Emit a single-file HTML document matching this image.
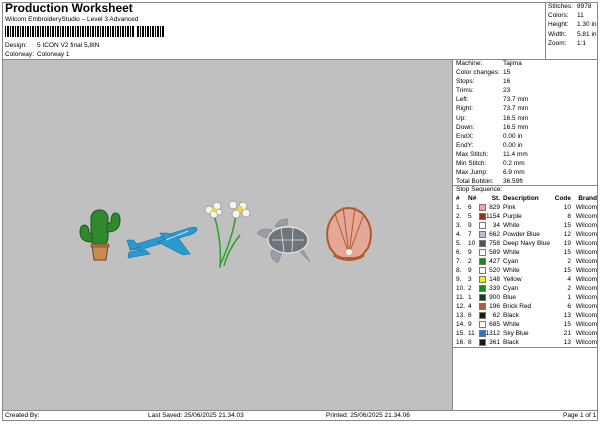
<!DOCTYPE html>
<html><head><meta charset="utf-8"><style>
*{margin:0;padding:0;box-sizing:border-box}
body{width:600px;height:424px;background:#fff;font-family:"Liberation Sans",Arial,sans-serif;color:#000;position:relative;overflow:hidden}
.a{position:absolute;white-space:nowrap}
.s{font-size:6.5px;line-height:9px}
.row{position:absolute;left:456px;width:141px;height:9px;font-size:6.5px;line-height:9px}
.row span{position:absolute}
.sw{position:absolute;left:23px;top:1px;width:7px;height:7px;border:1px solid #777}
</style></head><body>
<div class="a" style="left:2px;top:2px;width:596px;height:419px;border:1px solid #888"></div>
<div class="a" style="left:5px;top:1px;font-size:12px;font-weight:bold">Production Worksheet</div>
<div class="a s" style="left:5px;top:15px">Wilcom EmbroideryStudio – Level 3 Advanced</div>
<div class="a" style="left:5px;top:26px;width:160px;height:11px;background:repeating-linear-gradient(90deg,#000 0 1px,#fff 1px 2px,#000 2px 4px,#fff 4px 5px)"></div>
<div class="a" style="left:134px;top:26px;width:3px;height:11px;background:#fff"></div>
<div class="a s" style="left:5px;top:41px">Design:</div><div class="a s" style="left:37px;top:41px">5 ICON V2 final 5,8IN</div>
<div class="a s" style="left:5px;top:50px">Colorway:</div><div class="a s" style="left:37px;top:50px">Colorway 1</div>
<div class="a" style="left:545px;top:2px;width:1px;height:57px;background:#888"></div>
<div class="a s" style="left:548px;top:2px;line-height:9.2px">Stitches:<br>Colors:<br>Height:<br>Width:<br>Zoom:</div>
<div class="a s" style="left:577px;top:2px;line-height:9.2px">8978<br>11<br>1.30 in<br>5.81 in<br>1:1</div>
<div class="a" style="left:3px;top:59px;width:594px;height:1px;background:#888"></div>
<div class="a" style="left:3px;top:60px;width:449px;height:350px;background:#c0c0c0"></div>
<div class="a" style="left:452px;top:60px;width:1px;height:350px;background:#888"></div>
<div class="a s" style="left:456px;top:59px;line-height:9.1px">Machine:<br>Color changes:<br>Stops:<br>Trims:<br>Left:<br>Right:<br>Up:<br>Down:<br>EndX:<br>EndY:<br>Max Stitch:<br>Min Stitch:<br>Max Jump:<br>Total Bobbin:</div>
<div class="a s" style="left:503px;top:59px;line-height:9.1px">Tajima<br>15<br>16<br>23<br>73.7 mm<br>73.7 mm<br>16.5 mm<br>16.5 mm<br>0.00 in<br>0.00 in<br>11.4 mm<br>0.2 mm<br>6.9 mm<br>36.59ft</div>
<div class="a" style="left:453px;top:185px;width:145px;height:1px;background:#888"></div>
<div class="a s" style="left:456px;top:185px">Stop Sequence:</div>
<div class="row" style="top:194px;font-weight:bold;text-decoration:underline"><span style="left:0">#</span><span style="left:12px">N#</span><span style="right:97px">St.</span><span style="left:47px">Description</span><span style="right:26px">Code</span><span style="right:0">Brand</span></div>
<div id="rows"></div>
<div class="a" style="left:453px;top:347px;width:145px;height:1px;background:#888"></div>
<div class="a" style="left:3px;top:410px;width:594px;height:1px;background:#888"></div>
<div class="a s" style="left:5px;top:411px">Created By:</div>
<div class="a s" style="left:148px;top:411px">Last Saved: 25/06/2025 21.34.03</div>
<div class="a s" style="left:326px;top:411px">Printed: 25/06/2025 21.34.06</div>
<div class="a s" style="left:563px;top:411px">Page 1 of 1</div>
<svg class="a" style="left:0;top:0" width="600" height="424">
<g stroke="#1d5a1d" stroke-width="1">
<rect x="91" y="210" width="17" height="36" rx="8" fill="#2f8a2f"/>
<path d="M92 242 Q80 242 80 232 Q80 225 85 225 Q89 226 89 233 L92 234Z" fill="#2f8a2f"/>
<path d="M107 232 Q120 232 120 220 Q120 213 115 213 Q111 214 111 222 L107 224Z" fill="#2f8a2f"/>
</g>
<path d="M92 245 L108 245 L106 260 L94 260Z" fill="#c98a55" stroke="#6b4020" stroke-width="1"/>
<rect x="91" y="244" width="18" height="3" fill="#b0703e" stroke="#6b4020" stroke-width=".6"/>
<g fill="#2a9bd0" stroke="#1c6f9a" stroke-width=".6">
<path d="M130 246 L186 229 Q198 225 197 230 Q195 234 186 236 L140 250 L130 250Z"/>
<path d="M127 240 L133 240 L140 247 L130 250Z"/>
<path d="M129 252 L145 250 L150 254 L128 258Z"/>
<path d="M158 242 L176 235 L190 254 L183 255Z"/>
<path d="M160 233 L168 233 L175 237 L165 240Z"/>
</g>
<path d="M166 240 L188 231" stroke="#cde" stroke-width="1"/>
<g stroke="#2aa02a" stroke-width="1.5" fill="none">
<path d="M214 215 Q222 240 220 268"/><path d="M236 215 Q232 240 220 265"/><path d="M240 235 Q228 250 224 266"/>
</g>
<g fill="#f4f4ee" stroke="#666" stroke-width=".5">
<circle cx="209" cy="210" r="4"/><circle cx="217" cy="206" r="4"/><circle cx="214" cy="214" r="4"/><circle cx="219" cy="212" r="3"/>
<circle cx="233" cy="205" r="4"/><circle cx="243" cy="206" r="4"/><circle cx="236" cy="214" r="4"/><circle cx="246" cy="213" r="4"/>
</g>
<circle cx="214" cy="210" r="2.5" fill="#e8d840"/><circle cx="240" cy="209" r="3" fill="#e8d840"/>
<g fill="#9a9ca8" stroke="#777" stroke-width=".5">
<path d="M257 233 Q262 227 272 230 L270 238 Q262 238 257 233Z"/>
<path d="M275 227 Q278 218 288 219 L287 225Z"/>
<path d="M272 250 Q268 258 278 263 L282 252Z"/>
<path d="M300 252 Q306 258 310 262 L302 248Z"/>
</g>
<ellipse cx="288" cy="240" rx="20" ry="13" fill="#6f737b" stroke="#e8e8e0" stroke-width="1.2"/>
<g stroke="#e8e8e0" stroke-width=".8" fill="none"><path d="M272 240 L304 240 M281 228 L284 252 M293 228 L292 252"/></g>
<path d="M330 248 Q322 228 336 213 Q348 203 362 213 Q376 228 368 248 L360 258 L338 258Z" fill="#e4a898" stroke="#b05a2c" stroke-width="2"/>
<g stroke="#b05a2c" stroke-width="1" fill="none"><path d="M349 254 L335 214 M349 254 L343 207 M349 254 L355 207 M349 254 L364 214"/></g>
<path d="M334 255 Q349 264 364 255" stroke="#b05a2c" stroke-width="3" fill="none"/>
<circle cx="349" cy="252" r="3" fill="#f4f4ec"/>
</svg>
<script>
var d=[["1.","6","#f2a0a8","829","Pink","10"],["2.","5","#a03010","1154","Purple","8"],["3.","9","#fff","34","White","15"],["4.","7","#c0b8d8","662","Powder Blue","12"],["5.","10","#505060","758","Deep Navy Blue","19"],["6.","9","#fff","589","White","15"],["7.","2","#109010","427","Cyan","2"],["8.","9","#fff","520","White","15"],["9.","3","#f0f010","148","Yellow","4"],["10.","2","#109010","339","Cyan","2"],["11.","1","#104010","900","Blue","1"],["12.","4","#b06040","196","Brick Red","6"],["13.","8","#201810","62","Black","13"],["14.","9","#fff","685","White","15"],["15.","11","#1080c8","1312","Sky Blue","21"],["16.","8","#201810","361","Black","13"]];
var h="";d.forEach(function(r,i){h+='<div class="row" style="top:'+(203+i*9)+'px"><span style="left:0">'+r[0]+'</span><span style="left:12px">'+r[1]+'</span><div class="sw" style="background:'+r[2]+'"></div><span style="right:97px">'+r[3]+'</span><span style="left:47px">'+r[4]+'</span><span style="right:26px">'+r[5]+'</span><span style="right:0">Wilcom</span></div>'});
document.getElementById("rows").innerHTML=h;
</script>
</body></html>
